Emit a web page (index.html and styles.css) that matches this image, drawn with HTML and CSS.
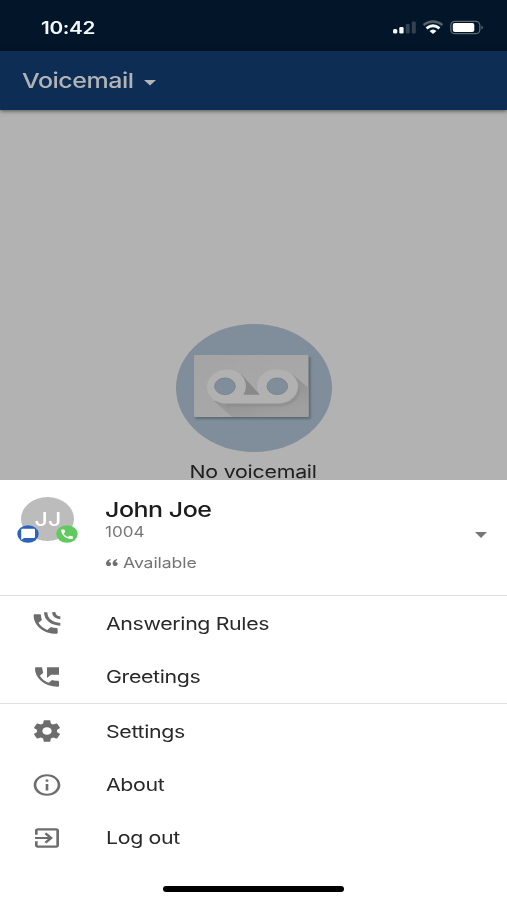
FILE: index.html
```html
<!DOCTYPE html>
<html lang="en">
<head>
<meta charset="utf-8">
<title>Voicemail</title>
<link rel="stylesheet" href="styles.css">
</head>
<body>
<div class="phone">
  <header class="status">
    <span class="wide time">10:42</span>
    <svg class="indicators" width="92" height="16" viewBox="0 0 92 16">
      <g fill="#f4f8fa"><rect x="1" y="9" width="4.300" height="4.500" rx="1.500"/><rect x="7.300" y="7" width="4.300" height="6.500" rx="1.300"/></g>
      <g fill="#34414f"><rect x="13.700" y="4" width="4" height="9.500" rx="1"/><rect x="19.800" y="1.500" width="4" height="12" rx="1"/></g>
      <path d="M31.500 5 Q41 -2 50.500 5" fill="none" stroke="#55616b" stroke-width="2.300"/>
      <path d="M34.500 8.300 Q41 3.300 47.500 8.300" fill="none" stroke="#f4f8fa" stroke-width="2.800"/>
      <path d="M37.500 11 Q41 8 44.500 11 L41 14Z" fill="#f4f8fa"/>
      <rect x="58.800" y="1.300" width="29" height="12.400" rx="4" fill="none" stroke="#5c6872" stroke-width="1.300"/>
      <rect x="60.800" y="3" width="21.500" height="9" rx="2" fill="#fff"/>
      <path d="M89.500 5.500 Q92 7.500 89.500 9.500Z" fill="#76818a"/>
    </svg>
  </header>
  <nav class="appbar">
    <span class="wide title">Voicemail</span>
    <svg class="caret" width="12" height="6" viewBox="0 0 12 6"><path d="M0 0H12L6 5.500Z" fill="#b3b5b8"/></svg>
  </nav>
  <main class="stage">
    <svg class="cassette" width="156" height="128" viewBox="176 324 156 128">
      <defs>
        <linearGradient id="card" x1="0" y1="0" x2="1" y2="1"><stop offset="0" stop-color="#a4a4a4"/><stop offset="1" stop-color="#aaa"/></linearGradient>
        <linearGradient id="cast" x1="0" y1="0" x2="0.600" y2="1"><stop offset="0" stop-color="#858585"/><stop offset="1" stop-color="#a0a0a0"/></linearGradient>
        <filter id="soft" x="-10%" y="-10%" width="120%" height="130%"><feGaussianBlur stdDeviation="1.200"/></filter>
      </defs>
      <ellipse cx="254" cy="388" rx="78" ry="64" fill="#808d9a"/>
      <rect x="195.500" y="357" width="115" height="62" fill="#5f6972" filter="url(#soft)"/>
      <rect x="194" y="355" width="114.500" height="62" rx="1" fill="url(#card)"/>
      <path d="M214 401L232 417H308.500V388L292 374L290 401Z" fill="url(#cast)"/>
      <path d="M241 374L260 395H244Z" fill="#898989"/>
      <path d="M227 405H280Q298 403 299 388" fill="none" stroke="#858585" stroke-width="1.500" filter="url(#soft)"/>
      <path fill-rule="evenodd" fill="#b1b1b1" d="M227 369.500C215 369.500 207 378 207 387C207 396 215 403.500 227 403.500H277C289 403.500 298 396 298 386.500C298 377 289 369.500 277 369.500C265 369.500 257 377 257 386.500Q257 392 260 394.800H243Q246 391 246 386.500C246 377 238 369.500 227 369.500ZM214.500 386.300a10.500 8.500 0 1 0 21 0a10.500 8.500 0 1 0-21 0ZM266.800 386.300a10.500 8.500 0 1 0 21 0a10.500 8.500 0 1 0-21 0Z"/>
      <g fill="#808d9a" stroke="#777f86" stroke-width="0.800"><ellipse cx="225" cy="386.300" rx="10.300" ry="8.300"/><ellipse cx="277.300" cy="386.300" rx="10.300" ry="8.300"/></g>
    </svg>
    <span class="wide empty">No voicemail</span>
  </main>
  <section class="sheet">
    <div class="profile">
      <div class="avatar">
        <span class="wide initials">JJ</span>
        <svg class="badge chat" viewBox="0 0 22 18"><ellipse cx="11" cy="9" rx="10.700" ry="8.800" fill="#2b62bb"/><path d="M5 3.800H17Q18 3.800 18 4.700V12Q18 13 17 13H7L4.200 15V4.700Q4.200 3.800 5 3.800Z" fill="#fff"/></svg>
        <svg class="badge call" viewBox="0 0 22 18"><ellipse cx="11" cy="9" rx="10.700" ry="8.800" fill="#62c95f"/><svg x="3.200" y="2.800" width="15.500" height="12.800" viewBox="0 0 24 24" preserveAspectRatio="none"><path fill="#fff" d="M6.620 10.790c1.440 2.830 3.760 5.140 6.590 6.590l2.200-2.200c.27-.27.67-.36 1.020-.24 1.120.37 2.330.57 3.570.57.55 0 1 .45 1 1V20c0 .55-.45 1-1 1-9.390 0-17-7.610-17-17 0-.55.45-1 1-1h3.500c.55 0 1 .45 1 1 0 1.250.2 2.450.57 3.570.11.35.03.74-.25 1.020l-2.200 2.200z"/></svg></svg>
      </div>
      <div class="person">
        <span class="wide name">John Joe</span>
        <span class="wide ext">1004</span>
        <div class="presence">
          <svg width="12" height="7" viewBox="0 0 12 7" fill="#707070"><path id="q" d="M4.300 0C1.500.7 0 2.200 0 4.400C0 6 1.100 7 2.600 7C4 7 5.100 6.200 5.100 4.900C5.100 3.700 4.200 3 3 2.900C3.100 2.100 3.600 1.500 4.700 1Z"/><use href="#q" x="6.600"/></svg>
          <span class="wide avail">Available</span>
        </div>
      </div>
      <svg class="caret more" width="12" height="6" viewBox="0 0 12 6"><path d="M0 0H12L6 6Z" fill="#777"/></svg>
    </div>
    <ul class="menu first">
      <li><svg class="icon" viewBox="0 0 24 24" preserveAspectRatio="none"><path d="M20 15.500c-1.250 0-2.450-.2-3.570-.57-.35-.11-.74-.03-1.020.24l-2.200 2.200c-2.830-1.440-5.150-3.750-6.590-6.580l2.200-2.210c.28-.27.36-.66.25-1.010C8.700 6.450 8.500 5.250 8.500 4c0-.55-.45-1-1-1H4c-.55 0-1 .45-1 1 0 9.390 7.610 17 17 17 .55 0 1-.45 1-1v-3.500c0-.55-.45-1-1-1z" transform="translate(-1 1)"/><path d="M11 2C11.200 8.500 15.500 13 22 13.200M17 2C17.200 5 19 7 22 7.200" fill="none" stroke="#6d6d6d" stroke-width="2.500"/></svg><span class="wide">Answering Rules</span></li>
      <li><svg class="icon" viewBox="0 0 24 24" preserveAspectRatio="none"><path d="M20 15.500c-1.250 0-2.450-.2-3.570-.57-.35-.11-.74-.03-1.020.24l-2.200 2.200c-2.830-1.440-5.150-3.750-6.590-6.580l2.200-2.210c.28-.27.36-.66.25-1.010C8.700 6.450 8.500 5.250 8.500 4c0-.55-.45-1-1-1H4c-.55 0-1 .45-1 1 0 9.390 7.610 17 17 17 .55 0 1-.45 1-1v-3.500c0-.55-.45-1-1-1zM12 3v10l3-3h6V3h-9z"/></svg><span class="wide">Greetings</span></li>
    </ul>
    <ul class="menu">
      <li><svg class="icon" viewBox="0 0 24 24" preserveAspectRatio="none"><path d="M19.430 12.980c.04-.32.07-.64.07-.98s-.03-.66-.07-.98l2.110-1.650c.19-.15.24-.42.12-.64l-2-3.460c-.12-.22-.39-.3-.61-.22l-2.490 1c-.52-.4-1.080-.73-1.690-.98l-.38-2.650C14.460 2.180 14.250 2 14 2h-4c-.25 0-.46.18-.49.42l-.38 2.650c-.61.25-1.170.59-1.690.98l-2.490-1c-.23-.09-.49 0-.61.22l-2 3.460c-.13.22-.07.49.12.64l2.110 1.650c-.04.32-.07.65-.07.98s.03.66.07.98l-2.110 1.650c-.19.15-.24.42-.12.64l2 3.460c.12.22.39.3.61.22l2.490-1c.52.4 1.080.73 1.690.98l.38 2.650c.03.24.24.42.49.42h4c.25 0 .46-.18.49-.42l.38-2.650c.61-.25 1.170-.59 1.690-.98l2.490 1c.23.09.49 0 .61-.22l2-3.460c.12-.22.07-.49-.12-.64l-2.110-1.650zM12 15.500c-1.930 0-3.500-1.570-3.500-3.500s1.570-3.500 3.500-3.500 3.500 1.570 3.500 3.500-1.570 3.500-3.500 3.500z"/></svg><span class="wide">Settings</span></li>
      <li><svg class="icon" viewBox="0 0 24 24" preserveAspectRatio="none"><path d="M11 17h2v-6h-2v6zm1-15C6.480 2 2 6.480 2 12s4.480 10 10 10 10-4.480 10-10S17.520 2 12 2zm0 18c-4.410 0-8-3.590-8-8s3.590-8 8-8 8 3.590 8 8-3.590 8-8 8zM11 9h2V7h-2v2z"/></svg><span class="wide">About</span></li>
      <li><svg class="icon" viewBox="0 0 24 24" preserveAspectRatio="none"><path d="M10.090 15.590L11.500 17l5-5-5-5-1.410 1.410L12.670 11H3v2h9.670l-2.580 2.590zM19 3H5c-1.110 0-2 .9-2 2v4h2V5h14v14H5v-4H3v4c0 1.100.89 2 2 2h14c1.100 0 2-.9 2-2V5c0-1.100-.9-2-2-2z"/></svg><span class="wide">Log out</span></li>
    </ul>
    <div class="home"></div>
  </section>
</div>
</body>
</html>
```
FILE: styles.css
```css
* { box-sizing: border-box; }
body { margin: 0; font-family: Inter, "Liberation Sans", sans-serif; background: #fff; }
svg { display: block; flex: none; }
.phone { width: 507px; height: 900px; display: flex; flex-direction: column; overflow: hidden; }
.wide { display: inline-block; white-space: nowrap; transform: scaleX(1.22); transform-origin: left center; }
.status { height: 51px; flex: none; display: flex; align-items: center; justify-content: space-between; padding: 4px 23px 0 41px; background: #031529; }
.time { font-size: 17px; font-weight: 600; letter-spacing: -.3px; color: #f4f8fa; }
.appbar { position: relative; height: 59px; flex: none; display: flex; align-items: center; padding-left: 22px; background: #0e2d55; box-shadow: 0 1px 4px rgba(0, 0, 0, .55); }
.title { width: 122px; font-size: 20.500px; font-weight: 500; letter-spacing: -.4px; color: #b1b3b6; }
.appbar .caret { margin-top: 4px; }
.stage { height: 370px; flex: none; display: flex; flex-direction: column; align-items: center; padding-top: 214px; background: #b2b2b2; }
.cassette { flex: none; }
.empty { margin-top: 9px; line-height: 19px; padding-top: 1px; font-size: 17.500px; letter-spacing: -.2px; color: #202020; transform-origin: center; }
.sheet { flex: 1; background: #fff; display: flex; flex-direction: column; }
.profile { height: 115px; flex: none; display: flex; align-items: flex-start; padding: 17px 20px 0 21px; }
.avatar { position: relative; width: 53px; height: 44px; border-radius: 50%; background: #bcbcbc; display: flex; align-items: center; justify-content: center; }
.initials { font-size: 19px; font-weight: 500; color: #fff; transform-origin: center; }
.badge { position: absolute; width: 22px; height: 18px; top: 28px; }
.chat { left: -4px; }
.call { left: 35px; }
.person { flex: 1; margin-left: 31px; display: flex; flex-direction: column; align-items: flex-start; }
.name { font-size: 20.500px; line-height: 26px; font-weight: 500; letter-spacing: -.4px; color: #1c1c1c; }
.ext { font-size: 14px; line-height: 18px; color: #777; }
.presence { display: flex; align-items: center; gap: 5px; margin-top: 11px; padding-left: 1px; height: 20px; }
.avail { font-size: 14.500px; letter-spacing: -.1px; color: #747474; }
.more { margin-top: 35px; }
.menu { margin: 0; padding: 0; list-style: none; border-top: 1px solid #e0e0e0; }
.menu.first { height: 108px; }
.menu li { display: flex; align-items: center; height: 53.400px; padding: 1px 0 0 31px; font-size: 17.500px; letter-spacing: -.3px; color: #292929; }
.menu .wide { margin-left: 43px; }
.icon { width: 32px; height: 26px; fill: #6d6d6d; }
.home { width: 181px; height: 6px; margin: 22px auto 0; border-radius: 3px; background: #000; }
```
